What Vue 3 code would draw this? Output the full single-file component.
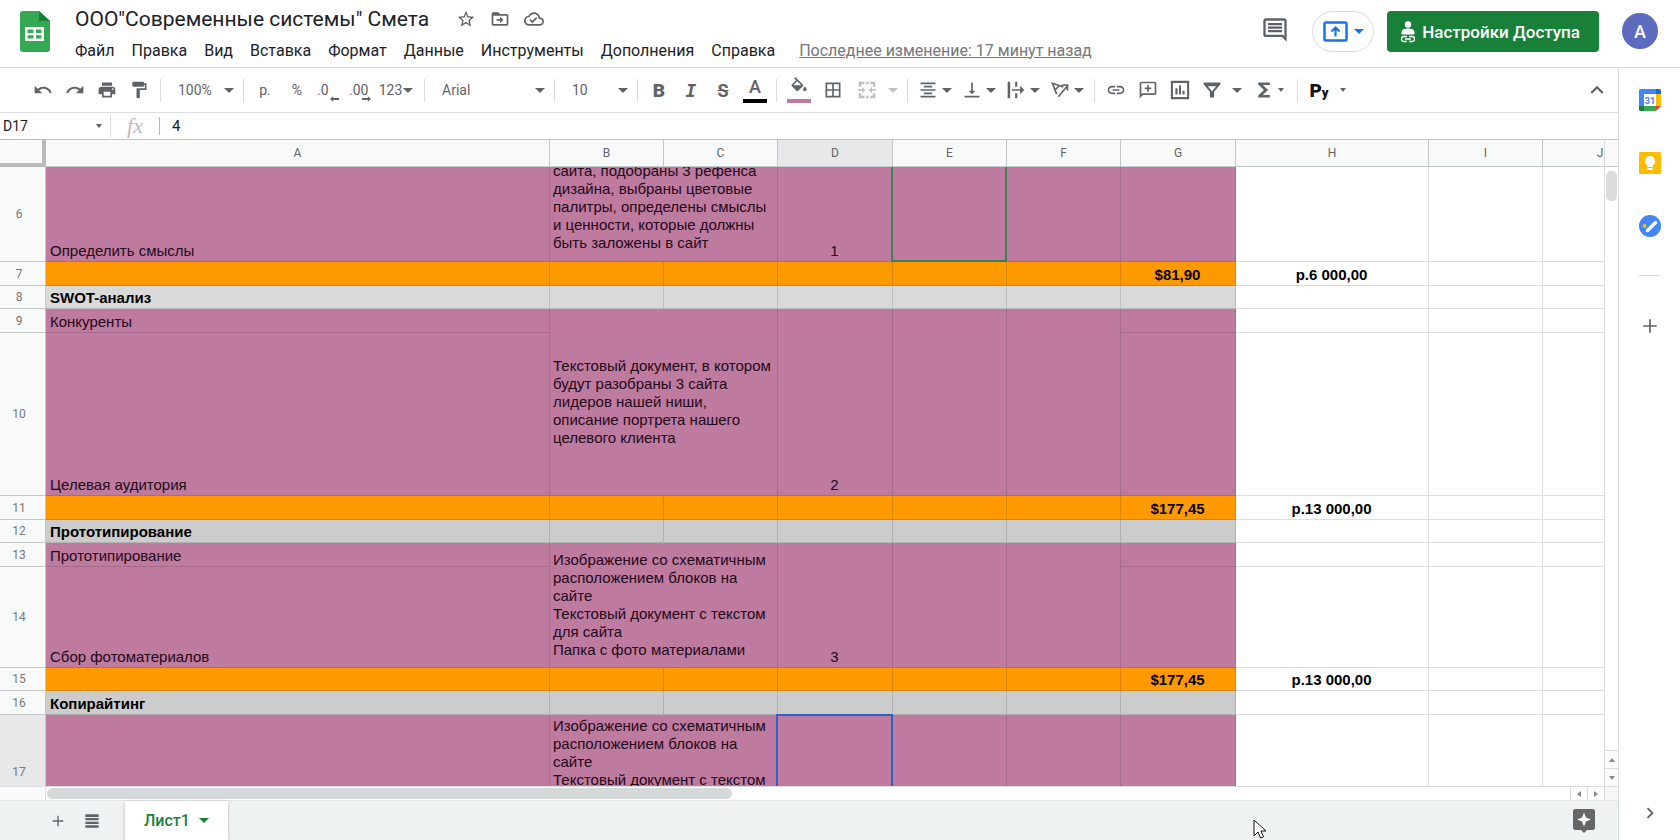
<script setup>
import { h, ref } from 'vue'

const paths = {
  undo: 'M12.5 8c-2.65 0-5.05.99-6.9 2.6L2 7v9h9l-3.62-3.62c1.39-1.16 3.16-1.88 5.12-1.88 3.54 0 6.55 2.31 7.6 5.5l2.37-.78C21.08 11.03 17.15 8 12.5 8z',
  redo: 'M18.4 10.6C16.55 8.99 14.15 8 11.5 8c-4.65 0-8.58 3.03-9.96 7.22L3.9 16c1.05-3.19 4.05-5.5 7.6-5.5 1.95 0 3.73.72 5.12 1.88L13 16h9V7l-3.6 3.6z',
  print: 'M19 8H5c-1.66 0-3 1.34-3 3v6h4v4h12v-4h4v-6c0-1.66-1.34-3-3-3zm-3 11H8v-5h8v5zm3-7c-.55 0-1-.45-1-1s.45-1 1-1 1 .45 1 1-.45 1-1 1zm-1-9H6v4h12V3z',
  paint: 'M18 4V3c0-.55-.45-1-1-1H5c-.55 0-1 .45-1 1v4c0 .55.45 1 1 1h12c.55 0 1-.45 1-1V6h1v4H9v11c0 .55.45 1 1 1h2c.55 0 1-.45 1-1v-9h8V4h-3z',
  fill: 'M16.56 8.94L7.62 0 6.21 1.41l2.38 2.38-5.15 5.15c-.59.59-.59 1.54 0 2.12l5.5 5.5c.29.29.68.44 1.06.44s.77-.15 1.06-.44l5.5-5.5c.59-.58.59-1.53 0-2.12zM5.21 10L10 5.21 14.79 10H5.21zM19 11.5s-2 2.17-2 3.5c0 1.1.9 2 2 2s2-.9 2-2c0-1.33-2-3.5-2-3.5z',
  borders: 'M3 3v18h18V3H3zm8 16H5v-6h6v6zm0-8H5V5h6v6zm8 8h-6v-6h6v6zm0-8h-6V5h6v6z',
  merge: 'M2 2h7v3H5v3H2zM11 2h3v3h-3zM16 2h6v6h-3V5h-3zM2 16h3v3h4v3H2zM11 19h3v3h-3zM16 19h3v-3h3v6h-6zM1 11h5V8.500l4 3.500-4 3.500V13H1zM23 11h-5V8.500L14 12l4 3.500V13h5z',
  align: 'M7 15v2h10v-2H7zm-4 6h18v-2H3v2zm0-8h18v-2H3v2zm4-6v2h10V7H7zM3 3v2h18V3H3z',
  bottom: 'M16 13h-3V3h-2v10H8l4 4 4-4zM3 19v2h18v-2H3z',
  wrap: 'M2 2h3v20H2zM11 2h2.500v6H11zM11 16h2.500v6H11zM7 11h10V7l5 5-5 5v-4H7z',
  link: 'M3.9 12c0-1.71 1.39-3.1 3.1-3.1h4V7H7c-2.76 0-5 2.24-5 5s2.24 5 5 5h4v-1.9H7c-1.71 0-3.1-1.39-3.1-3.1zM8 13h8v-2H8v2zm9-6h-4v1.9h4c1.71 0 3.1 1.39 3.1 3.1s-1.39 3.1-3.1 3.1h-4V17h4c2.76 0 5-2.24 5-5s-2.24-5-5-5z',
  addComment: 'M20 2H4c-1.1 0-2 .9-2 2v18l4-4h14c1.1 0 2-.9 2-2V4c0-1.1-.9-2-2-2zm0 14H5.200L4 17.200V4h16v12zM11 14h2v-3h3V9h-3V6h-2v3H8v2h3z',
  chart: 'M1 1v22h22V1H1zm19.500 19.500h-17v-17h17v17zM6.500 10H9v7.500H6.500zM10.800 6.500h2.400v11h-2.400zM15 13h2.500v4.500H15z',
  filter: 'M2 3h20v2.500l-7.500 8.500V21h-5v-7L2 5.500zM7 7.500l5 6 5-6z',
  sum: 'M19 3H5v2.500l7 6.500-7 6.500V21h14v-3h-8.500l6.500-6-6.500-6H19z',
  up: 'M12 8l-6 6 1.410 1.410L12 10.830l4.590 4.580L18 14z',
  right: 'M10 6L8.590 7.410 13.170 12l-4.580 4.590L10 18l6-6z',
  plus: 'M20 13h-7v7h-2v-7H4v-2h7V4h2v7h7z',
  star: 'M22 9.240l-7.190-.620L12 2 9.190 8.630 2 9.240l5.460 4.730L5.820 21 12 17.270 18.180 21l-1.630-7.030L22 9.240zM12 15.400l-3.760 2.270 1-4.280-3.320-2.880 4.380-.380L12 6.100l1.710 4.040 4.380.380-3.320 2.880 1 4.280L12 15.400z',
  move: 'M20 6h-8l-2-2H4c-1.100 0-2 .900-2 2v12c0 1.100.900 2 2 2h16c1.100 0 2-.900 2-2V8c0-1.100-.900-2-2-2zm0 12H4V8h16v10zM12 17l4-4-4-4v3H8v2h4z',
  cloud: 'M19.350 10.040C18.670 6.590 15.640 4 12 4 9.110 4 6.600 5.640 5.350 8.040 2.340 8.360 0 10.910 0 14c0 3.310 2.690 6 6 6h13c2.760 0 5-2.240 5-5 0-2.640-2.050-4.780-4.650-4.960zM19 18H6c-2.210 0-4-1.790-4-4 0-2.050 1.530-3.760 3.560-3.970l1.070-.110.500-.950C8.080 7.140 9.940 6 12 6c2.620 0 4.880 1.860 5.390 4.430l.300 1.500 1.530.110c1.560.100 2.780 1.410 2.780 2.960 0 1.650-1.350 3-3 3zm-9-3.820l-2.090-2.090L6.500 13.500 10 17l6.010-6.010-1.410-1.410z',
  comment: 'M21.990 4c0-1.100-.890-2-1.990-2H4c-1.100 0-2 .900-2 2v12c0 1.100.900 2 2 2h14l4 4-.010-18zM20 4v13.170L18.830 16H4V4h16zM6 12h12v2H6zm0-3h12v2H6zm0-3h12v2H6z',
  list: 'M2 2h20v4H2zM2 7.500h20v3.500H2zM2 13h20v3.500H2zM2 18.500h20V22H2z',
}

const Icon = (props) =>
  h('svg', { viewBox: '0 0 24 24', 'aria-hidden': 'true' }, [
    h('path', { d: paths[props.name], 'fill-rule': 'evenodd' }),
  ])
Icon.props = ['name']

const menus = ['Файл', 'Правка', 'Вид', 'Вставка', 'Формат', 'Данные', 'Инструменты', 'Дополнения', 'Справка']
const columns = ['A', 'B', 'C', 'D', 'E', 'F', 'G', 'H', 'I', 'J']

const zoom = ref('100%')
const font = ref('Arial')
const size = ref('10')
const address = ref('D17')
const formula = ref('4')

const layoutText =
  'Изображение со схематичным расположением блоков на сайте\nТекстовый документ с текстом для сайта\nПапка с фото материалами'

const cell = (text = '', kind = 'task', extra = {}) => ({ text, kind, ...extra })
const blank = () => [cell('', 'plain'), cell('', 'plain'), cell('', 'plain')]
const totals = (usd, rub) => [
  ...Array.from({ length: 6 }, () => cell('', 'total')),
  cell(usd, 'total strong center'),
  cell(rub, 'plain strong center'),
  cell('', 'plain'),
  cell('', 'plain'),
]
const section = (title, kind) => [
  cell(title, kind + ' strong'),
  ...Array.from({ length: 6 }, () => cell('', kind)),
  ...blank(),
]
const span = { rows: 2 }

const rows = [
  {
    n: 6, size: 'h95',
    cells: [
      cell('Определить смыслы'),
      cell('сайта, подобраны 3 рефенса дизайна, выбраны цветовые палитры, определены смыслы и ценности, которые должны быть заложены в сайт', 'task clipped', { cols: 2 }),
      cell('1', 'task center'), cell('', 'task peer'), cell(), cell(), ...blank(),
    ],
  },
  { n: 7, size: 'h24', cells: totals('$81,90', 'р.6 000,00') },
  { n: 8, size: 'h23', cells: section('SWOT-анализ', 'light') },
  {
    n: 9, size: 'h24',
    cells: [
      cell('Конкуренты'),
      cell('Текстовый документ, в котором будут разобраны 3 сайта лидеров нашей ниши, описание портрета нашего целевого клиента', 'task middle', { cols: 2, rows: 2 }),
      cell('2', 'task center', span), cell('', 'task', span), cell('', 'task', span), cell(), ...blank(),
    ],
  },
  { n: 10, size: 'h163', cells: [cell('Целевая аудитория'), cell(), ...blank()] },
  { n: 11, size: 'h24', cells: totals('$177,45', 'р.13 000,00') },
  { n: 12, size: 'h23', cells: section('Прототипирование', 'gray') },
  {
    n: 13, size: 'h24',
    cells: [
      cell('Прототипирование'),
      cell(layoutText, 'task middle', { cols: 2, rows: 2 }),
      cell('3', 'task center', span), cell('', 'task', span), cell('', 'task', span), cell(), ...blank(),
    ],
  },
  { n: 14, size: 'h101', cells: [cell('Сбор фотоматериалов'), cell(), ...blank()] },
  { n: 15, size: 'h23', cells: totals('$177,45', 'р.13 000,00') },
  { n: 16, size: 'h24', cells: section('Копирайтинг', 'gray') },
  {
    n: 17, size: 'h114',
    cells: [cell(), cell(layoutText, 'task middle', { cols: 2 }), cell('', 'task active'), cell(), cell(), cell(), ...blank()],
  },
]
</script>

<template>
  <div class="app">
    <header class="top">
      <svg class="logo" viewBox="0 0 30 41" aria-hidden="true">
        <path d="M3 0h16l11 10v28a3 3 0 0 1-3 3H3a3 3 0 0 1-3-3V3a3 3 0 0 1 3-3z" fill="#34a853" />
        <path d="M19 0l11 10H19z" fill="#188038" />
        <path d="M5 16h19v14H5zM7.500 18.500v3.500h6v-3.500zM16 18.500v3.500h5.500v-3.500zM7.500 24.300v3.200h6v-3.200zM16 24.300v3.200h5.500v-3.200z" fill="#fff" fill-rule="evenodd" />
      </svg>
      <div class="titles">
        <div class="title-row">
          <h1>ООО"Современные системы" Смета</h1>
          <button class="mini" aria-label="Пометить"><Icon name="star" /></button>
          <button class="mini" aria-label="Переместить"><Icon name="move" /></button>
          <button class="mini" aria-label="Состояние документа"><Icon name="cloud" /></button>
        </div>
        <nav class="menus">
          <button v-for="m in menus" :key="m">{{ m }}</button>
          <a href="#history">Последнее изменение: 17 минут назад</a>
        </nav>
      </div>
      <button class="comments" aria-label="Комментарии"><Icon name="comment" /></button>
      <button class="present" aria-label="Начать показ">
        <svg class="present-icon" viewBox="0 0 26 22" aria-hidden="true">
          <rect x="1.500" y="1.500" width="22" height="18" rx="1.500" fill="none" stroke="#1a73e8" stroke-width="2.500" />
          <path d="M12.500 15.500V7M8.500 10.500l4-4 4 4" fill="none" stroke="#1a73e8" stroke-width="2.200" />
        </svg>
        <i class="caret blue"></i>
      </button>
      <button class="share">
        <svg viewBox="0 0 16 22" aria-hidden="true">
          <circle cx="8" cy="3.500" r="3.200" fill="#fff" />
          <path d="M1.500 13.500v-2.500c0-2.500 3-3.500 6.500-3.500s6.500 1 6.500 3.500v2.500z" fill="#fff" />
          <path d="M7 15.500H4a2.500 2.500 0 0 0 0 5h3M9 15.500h3a2.500 2.500 0 0 1 0 5H9M5 18h6" fill="none" stroke="#fff" stroke-width="1.300" />
        </svg>
        Настройки Доступа
      </button>
      <button class="avatar" aria-label="Аккаунт">A</button>
    </header>

    <div class="body">
      <main class="editor">
        <div class="toolbar">
          <button aria-label="Отменить"><Icon name="undo" /></button>
          <button aria-label="Повторить"><Icon name="redo" /></button>
          <button aria-label="Печать"><Icon name="print" /></button>
          <button aria-label="Копировать форматирование"><Icon name="paint" /></button>
          <span class="sep"></span>
          <span class="pick small">
            <select v-model="zoom" aria-label="Масштаб"><option>100%</option></select>
            <i class="caret"></i>
          </span>
          <span class="sep"></span>
          <button>р.</button>
          <button>%</button>
          <button class="digits">.0<svg viewBox="0 0 10 6" aria-hidden="true"><path d="M0 3l3.500-3v2H10v2H3.500v2z" /></svg></button>
          <button class="digits">.00<svg viewBox="0 0 10 6" aria-hidden="true"><path d="M10 3L6.500 0v2H0v2h6.500v2z" /></svg></button>
          <button class="formats">123<i class="caret"></i></button>
          <span class="sep"></span>
          <span class="pick font">
            <select v-model="font" aria-label="Шрифт"><option>Arial</option></select>
            <i class="caret"></i>
          </span>
          <span class="sep"></span>
          <span class="pick small">
            <select v-model="size" aria-label="Размер шрифта"><option>10</option></select>
            <i class="caret"></i>
          </span>
          <span class="sep"></span>
          <button class="bold">B</button>
          <button class="italic">I</button>
          <button class="strike">S</button>
          <button class="color">A<span class="swatch black"></span></button>
          <span class="sep"></span>
          <button class="color mid" aria-label="Цвет заливки"><Icon name="fill" /><span class="swatch mauve"></span></button>
          <button class="mid" aria-label="Границы"><Icon name="borders" /></button>
          <button class="mid off" aria-label="Объединить ячейки"><Icon name="merge" /></button>
          <button class="drop off" aria-label="Варианты объединения"><i class="caret"></i></button>
          <span class="sep"></span>
          <button class="pair" aria-label="Выравнивание по горизонтали"><Icon name="align" /><i class="caret"></i></button>
          <button class="pair" aria-label="Выравнивание по вертикали"><Icon name="bottom" /><i class="caret"></i></button>
          <button class="pair" aria-label="Перенос текста"><Icon name="wrap" /><i class="caret"></i></button>
          <button class="pair" aria-label="Поворот текста">
            <svg viewBox="0 0 24 24" aria-hidden="true">
              <path d="M10 20L21 7M21 13V6h-7M8 17L3 4l13 4.500M6 12l5.500-5.500" fill="none" stroke="#5f6368" stroke-width="2" />
            </svg>
            <i class="caret"></i>
          </button>
          <span class="sep"></span>
          <button aria-label="Вставить ссылку"><Icon name="link" /></button>
          <button aria-label="Вставить комментарий"><Icon name="addComment" /></button>
          <button aria-label="Вставить диаграмму"><Icon name="chart" /></button>
          <button aria-label="Создать фильтр"><Icon name="filter" /></button>
          <button class="drop" aria-label="Фильтры"><i class="caret"></i></button>
          <button class="pair wide" aria-label="Функции"><Icon name="sum" /><i class="caret tiny"></i></button>
          <span class="sep"></span>
          <button class="pair script">P<small>у</small><i class="caret tiny"></i></button>
          <button class="collapse" aria-label="Скрыть меню"><Icon name="up" /></button>
        </div>

        <div class="formula">
          <input v-model="address" class="address" aria-label="Диапазон" />
          <i class="caret tiny"></i>
          <span class="rule"></span>
          <span class="fx">fx</span>
          <span class="rule short"></span>
          <input v-model="formula" class="value" aria-label="Формула" />
        </div>

        <div class="sheet">
          <div class="viewport">
            <table>
              <colgroup>
                <col class="c-head" />
                <col v-for="c in columns" :key="c" :class="'c-' + c" />
              </colgroup>
              <thead>
                <tr>
                  <td class="corner"></td>
                  <th v-for="c in columns" :key="c" scope="col" :class="{ current: c === 'D' }">{{ c }}</th>
                </tr>
              </thead>
              <tbody>
                <tr v-for="r in rows" :key="r.n" :class="r.size">
                  <th scope="row" :class="{ current: r.n === 17 }">{{ r.n }}</th>
                  <td v-for="(c, i) in r.cells" :key="i" :class="c.kind" :colspan="c.cols" :rowspan="c.rows">
                    <div v-if="c.text" class="text">{{ c.text }}</div>
                  </td>
                </tr>
              </tbody>
            </table>
          </div>
          <div class="vbar">
            <div class="vhead"></div>
            <div class="vtrack"><div class="vthumb"></div></div>
            <button aria-label="Вверх"><i class="arrow n"></i></button>
            <button aria-label="Вниз"><i class="arrow s"></i></button>
          </div>
        </div>

        <div class="hbar">
          <div class="hstart"></div>
          <div class="htrack"><div class="hthumb"></div></div>
          <button aria-label="Влево"><i class="arrow w"></i></button>
          <button aria-label="Вправо"><i class="arrow e"></i></button>
          <div class="hend"></div>
        </div>

        <footer class="tabs">
          <button class="tool" aria-label="Добавить лист"><Icon name="plus" /></button>
          <button class="tool" aria-label="Все листы"><Icon name="list" /></button>
          <button class="tab">Лист1<i class="caret green"></i></button>
          <button class="explore" aria-label="Анализ данных">
            <svg viewBox="0 0 22 24" aria-hidden="true">
              <path d="M2.500 0h17A2.500 2.500 0 0 1 22 2.500v16a2.500 2.500 0 0 1-2.500 2.500H14l-3 3-3-3H2.500A2.500 2.500 0 0 1 0 18.500v-16A2.500 2.500 0 0 1 2.500 0z" fill="#666" />
              <path d="M11 3.500l2 5 5 2-5 2-2 5-2-5-5-2 5-2z" fill="#fff" />
            </svg>
          </button>
        </footer>
      </main>

      <aside class="side">
        <button aria-label="Календарь">
          <svg viewBox="0 0 22 22" aria-hidden="true">
            <path d="M1.500 0h15.500v5H5v12H0V1.500A1.500 1.500 0 0 1 1.500 0z" fill="#4285f4" />
            <path d="M17 0h3.500A1.500 1.500 0 0 1 22 1.500V5h-5z" fill="#1967d2" />
            <path d="M17 5h5v12h-5z" fill="#fbbc04" />
            <path d="M5 17h12v5H5z" fill="#34a853" />
            <path d="M0 17h5v5H1.500A1.500 1.500 0 0 1 0 20.500z" fill="#188038" />
            <path d="M17 17h5l-5 5z" fill="#ea4335" />
            <path d="M5 5h12v12H5z" fill="#fff" />
            <text x="11" y="14.500" text-anchor="middle">31</text>
          </svg>
        </button>
        <button aria-label="Keep">
          <svg viewBox="0 0 22 22" aria-hidden="true">
            <rect width="22" height="22" rx="1.500" fill="#fbbc04" />
            <path d="M11 4a5 5 0 0 0-3 9v2h6v-2a5 5 0 0 0-3-9zM8.500 16h5v2h-5z" fill="#fff" />
          </svg>
        </button>
        <button aria-label="Задачи">
          <svg viewBox="0 0 22 22" aria-hidden="true">
            <circle cx="11" cy="11" r="11" fill="#4285f4" />
            <path d="M8.500 15.500L16.500 7.500" stroke="#fff" stroke-width="3.500" stroke-linecap="round" />
            <circle cx="5.500" cy="11" r="2" fill="#fbbc04" />
          </svg>
        </button>
        <hr />
        <button class="add" aria-label="Установить дополнения"><Icon name="plus" /></button>
        <button class="hide" aria-label="Скрыть панель"><Icon name="right" /></button>
      </aside>
    </div>

    <svg class="pointer" viewBox="0 0 14 22" aria-hidden="true">
      <path d="M1 1v16l4-4 2.500 6 3-1.200L8 12h5z" fill="#fff" stroke="#111" />
    </svg>
  </div>
</template>

<style>
body {
  margin: 0;
}
</style>

<style scoped>
.app {
  display: flex;
  flex-direction: column;
  height: 100vh;
  overflow: hidden;
  position: relative;
  background: #fff;
  color: #202124;
  font-family: Roboto, "Liberation Sans", sans-serif;
}
.app * {
  box-sizing: border-box;
}
button {
  display: flex;
  align-items: center;
  justify-content: center;
  padding: 0;
  border: 0;
  background: none;
  color: inherit;
  font: inherit;
}
svg {
  display: block;
  fill: #5f6368;
  flex: none;
}
.caret {
  flex: none;
  border: 5px solid transparent;
  border-top-color: #5f6368;
  border-bottom: 0;
}
.caret.tiny {
  border-width: 4px 3px 0;
}
.caret.blue {
  border-top-color: #1a73e8;
}
.caret.green {
  border-top-color: #188038;
}

/* Header */
.top {
  display: flex;
  height: 68px;
  flex: none;
  padding: 0 22px 0 20px;
  border-bottom: 1px solid #dadce0;
}
.logo {
  width: 30px;
  height: 41px;
  margin-top: 11px;
}
.titles {
  flex: 1;
  padding: 4px 0 0 25px;
}
.title-row {
  display: flex;
  align-items: center;
  height: 30px;
}
h1 {
  margin: 0 20px 0 0;
  font-size: 21px;
  font-weight: 400;
  white-space: nowrap;
}
.mini {
  width: 34px;
  height: 24px;
}
.mini svg {
  width: 20px;
  height: 20px;
}
.menus {
  display: flex;
  align-items: center;
  gap: 17px;
  height: 32px;
  font-size: 16px;
  white-space: nowrap;
}
.menus a {
  margin-left: 7px;
  color: #777;
}
.comments {
  width: 24px;
  margin: 18px 25px 0 0;
  height: 24px;
}
.comments svg {
  width: 28px;
  height: 28px;
}
.present {
  width: 62px;
  height: 41px;
  margin: 11px 13px 0 0;
  gap: 5px;
  border: 1px solid #dadce0;
  border-radius: 21px;
}
.present-icon {
  width: 26px;
  height: 22px;
}
.share {
  height: 41px;
  margin: 11px 23px 0 0;
  padding: 0 19px 0 13px;
  gap: 6px;
  border-radius: 4px;
  background: #188038;
  color: #fff;
  font-size: 17px;
  font-weight: 500;
  white-space: nowrap;
}
.share svg {
  width: 16px;
  height: 22px;
}
.avatar {
  width: 36px;
  height: 36px;
  margin-top: 13px;
  border-radius: 50%;
  background: #5c6bc0;
  color: #fff;
  font-size: 18px;
  font-weight: 500;
}

/* Page body */
.body {
  display: flex;
  flex: 1;
  min-height: 0;
}
.editor {
  display: flex;
  flex-direction: column;
  flex: 1;
  min-width: 0;
}

/* Toolbar */
.toolbar {
  display: flex;
  align-items: center;
  height: 45px;
  flex: none;
  padding: 0 5px 0 27px;
  border-bottom: 1px solid #dadce0;
  font-size: 14px;
  color: #5f6368;
}
.toolbar button {
  width: 32px;
  height: 32px;
  flex: none;
}
.toolbar svg {
  width: 20px;
  height: 20px;
}
.sep {
  width: 1px;
  height: 23px;
  flex: none;
  margin: 0 5px;
  background: #dadce0;
}
.pick {
  display: grid;
  align-items: center;
  flex: none;
}
.pick > * {
  grid-area: 1 / 1;
}
.pick .caret {
  justify-self: end;
  margin-right: 4px;
  pointer-events: none;
}
.pick select {
  width: 100%;
  height: 32px;
  padding: 0 0 0 12px;
  border: 0;
  appearance: none;
  background: none;
  color: inherit;
  font: inherit;
}
.pick.small {
  width: 72px;
}
.pick.font {
  width: 119px;
}
.toolbar .digits {
  position: relative;
  justify-content: flex-start;
  padding-left: 4px;
}
.toolbar .digits svg {
  position: absolute;
  right: 6px;
  bottom: 4px;
  width: 9px;
  height: 6px;
}
.toolbar .formats {
  width: 42px;
  padding-right: 4px;
  gap: 1px;
}
.toolbar .bold {
  font-size: 19px;
  font-weight: 900;
}
.toolbar .italic {
  font: italic bold 18px "DejaVu Sans Mono", monospace;
}
.toolbar .strike {
  font-size: 18px;
  font-weight: 700;
  text-decoration: line-through;
}
.toolbar .color {
  flex-direction: column;
  font-size: 18px;
  font-weight: 500;
  line-height: 20px;
}
.toolbar .color svg {
  width: 20px;
  height: 20px;
}
.swatch {
  width: 24px;
  height: 4px;
  margin-top: 2px;
}
.swatch.black {
  background: #000;
}
.swatch.mauve {
  background: #bf7a9f;
}
.toolbar .mid {
  width: 34px;
}
.toolbar .drop {
  width: 18px;
}
.toolbar .off {
  opacity: 0.4;
}
.toolbar .pair {
  width: 44px;
  padding-right: 1px;
  gap: 4px;
}
.toolbar .wide {
  width: 46px;
}
.toolbar .script {
  width: 50px;
  gap: 0;
  align-items: center;
  color: #111;
  font-size: 19px;
  font-weight: 900;
}
.script small {
  padding-top: 4px;
  font-size: 13px;
}
.script .caret {
  margin-left: 11px;
}
.toolbar .collapse {
  margin-left: auto;
}
.toolbar .collapse svg {
  width: 26px;
  height: 26px;
}

/* Formula bar */
.formula {
  display: flex;
  align-items: center;
  height: 26px;
  flex: none;
}
.formula input {
  height: 24px;
  padding: 0;
  border: 0;
  outline: 0;
  background: none;
  color: #202124;
  font: 14px Roboto, "Liberation Sans", sans-serif;
}
.formula .address {
  width: 92px;
  padding-left: 3px;
}
.formula .caret {
  margin: 0 8px 0 4px;
}
.rule {
  width: 1px;
  height: 22px;
  background: #dadce0;
}
.fx {
  width: 48px;
  color: #bbb;
  font: italic 22px "Liberation Serif", serif;
  line-height: 22px;
  text-align: center;
}
.rule.short {
  height: 18px;
  background: #bbb;
}
.formula .value {
  flex: 1;
  margin-left: 12px;
  font-size: 15px;
}

/* Grid */
.sheet {
  display: flex;
  flex: 1;
  min-height: 0;
}
.viewport {
  flex: 1;
  min-width: 0;
  overflow: hidden;
}
table {
  width: 1657px;
  table-layout: fixed;
  border-collapse: separate;
  border-spacing: 0;
  font: 15px "Liberation Sans", Arial, sans-serif;
  line-height: 18px;
}
.c-head { width: 46px; }
.c-A { width: 504px; }
.c-B, .c-C, .c-E, .c-F, .c-I { width: 114px; }
.c-D, .c-G, .c-J { width: 115px; }
.c-H { width: 193px; }
th {
  padding: 0;
  border: 0 solid #c4c7c8;
  border-width: 0 1px 1px 0;
  background: #f8fafa;
  color: #666;
  font: 12px Roboto, "Liberation Sans", sans-serif;
}
thead th {
  height: 28px;
  border-top-width: 1px;
}
tbody th {
  padding-right: 7px;
  color: #777;
}
th.current {
  background: #e6e8e9;
}
.corner {
  border: solid #b9bcbd;
  border-width: 1px 4px 4px 0;
  background: #f8fafa;
}
td {
  padding: 0 4px 1px 3px;
  border: 0 solid rgba(0, 0, 0, 0.13);
  border-width: 0 1px 1px 0;
  vertical-align: bottom;
}
td:nth-child(2) {
  padding-left: 4px;
}
.h23 { height: 23px; }
.h24 { height: 24px; }
.h95 { height: 95px; }
.h101 { height: 101px; }
.h114 { height: 114px; }
.h163 { height: 163px; }
.text {
  color: #22091a;
  white-space: pre-line;
}
.task { background: #bf7a9f; }
.total { background: #ff9900; }
.light { background: #d9d9d9; }
.gray { background: #cccccc; }
.plain { background: #fff; }
.strong .text {
  color: #000;
  font-weight: 700;
}
.center { text-align: center; }
.middle { vertical-align: middle; }
.clipped {
  padding-bottom: 0;
}
.clipped .text {
  display: flex;
  align-items: flex-end;
  height: 94px;
  padding-bottom: 9px;
  overflow: hidden;
}
.peer,
.active {
  position: relative;
}
.peer::after,
.active::after {
  content: "";
  position: absolute;
  inset: 0 -1px -1px -2px;
  border: 2px solid #3d8058;
  border-top: 0;
}
.active::after {
  inset: -1px -1px -1px -2px;
  border: 2px solid #2f62c4;
}

/* Scroll bars */
.vbar {
  display: flex;
  flex-direction: column;
  width: 14px;
  flex: none;
  border-left: 1px solid #dadce0;
}
.vhead {
  height: 28px;
  border: solid #c4c7c8;
  border-width: 1px 0;
  background: #f8fafa;
}
.vtrack {
  flex: 1;
  padding: 4px 1px;
}
.vthumb {
  height: 30px;
  border-radius: 5px;
  background: #dadcde;
}
.vbar button {
  height: 18px;
  border-top: 1px solid #dadce0;
  background: #fafafa;
}
.arrow {
  border: 3px solid transparent;
}
.arrow.n { border-top: 0; border-bottom: 4px solid #888; }
.arrow.s { border-bottom: 0; border-top: 4px solid #888; }
.arrow.w { border-left: 0; border-right: 4px solid #888; }
.arrow.e { border-right: 0; border-left: 4px solid #888; }
.hbar {
  display: flex;
  height: 14px;
  flex: none;
  border-top: 1px solid #dadce0;
}
.hstart {
  width: 46px;
  border-right: 1px solid #dadce0;
  background: #fafafa;
}
.htrack {
  flex: 1;
  padding: 1px;
}
.hthumb {
  width: 45%;
  height: 11px;
  border-radius: 6px;
  background: #d6d9da;
}
.hbar button {
  width: 17px;
  border-left: 1px solid #dadce0;
}
.hend {
  width: 14px;
  border-left: 1px solid #dadce0;
  background: #f6f6f6;
}

/* Sheet tabs */
.tabs {
  display: flex;
  align-items: center;
  height: 40px;
  flex: none;
  padding: 0 23px 0 41px;
  border-top: 1px solid #e2e4e6;
  background: #eff2f3;
}
.tool {
  width: 34px;
}
.tool svg {
  width: 16px;
  height: 16px;
}
.tab {
  height: 100%;
  margin-left: 16px;
  padding: 0 19px;
  gap: 9px;
  background: #fff;
  box-shadow: 0 1px 3px rgba(0, 0, 0, 0.25);
  color: #188038;
  font-size: 16px;
  font-weight: 500;
}
.explore {
  margin-left: auto;
}
.explore svg {
  width: 22px;
  height: 24px;
}

/* Side panel */
.side {
  display: flex;
  flex-direction: column;
  align-items: center;
  width: 62px;
  flex: none;
  padding: 20px 0 15px;
  border-left: 1px solid #dadce0;
}
.side button {
  height: 24px;
  margin-bottom: 39px;
}
.side button svg {
  width: 22px;
  height: 22px;
}
.side .add svg {
  width: 20px;
  height: 20px;
}
.side text {
  fill: #4285f4;
  font-size: 9px;
  font-weight: 700;
}
.side hr {
  width: 22px;
  margin: -2px 0 38px;
  border: 0;
  border-top: 1px solid #dadce0;
}
.side .hide {
  margin: auto 0 0;
}

.pointer {
  position: absolute;
  left: 1253px;
  top: 819px;
  width: 14px;
  height: 22px;
}
</style>
